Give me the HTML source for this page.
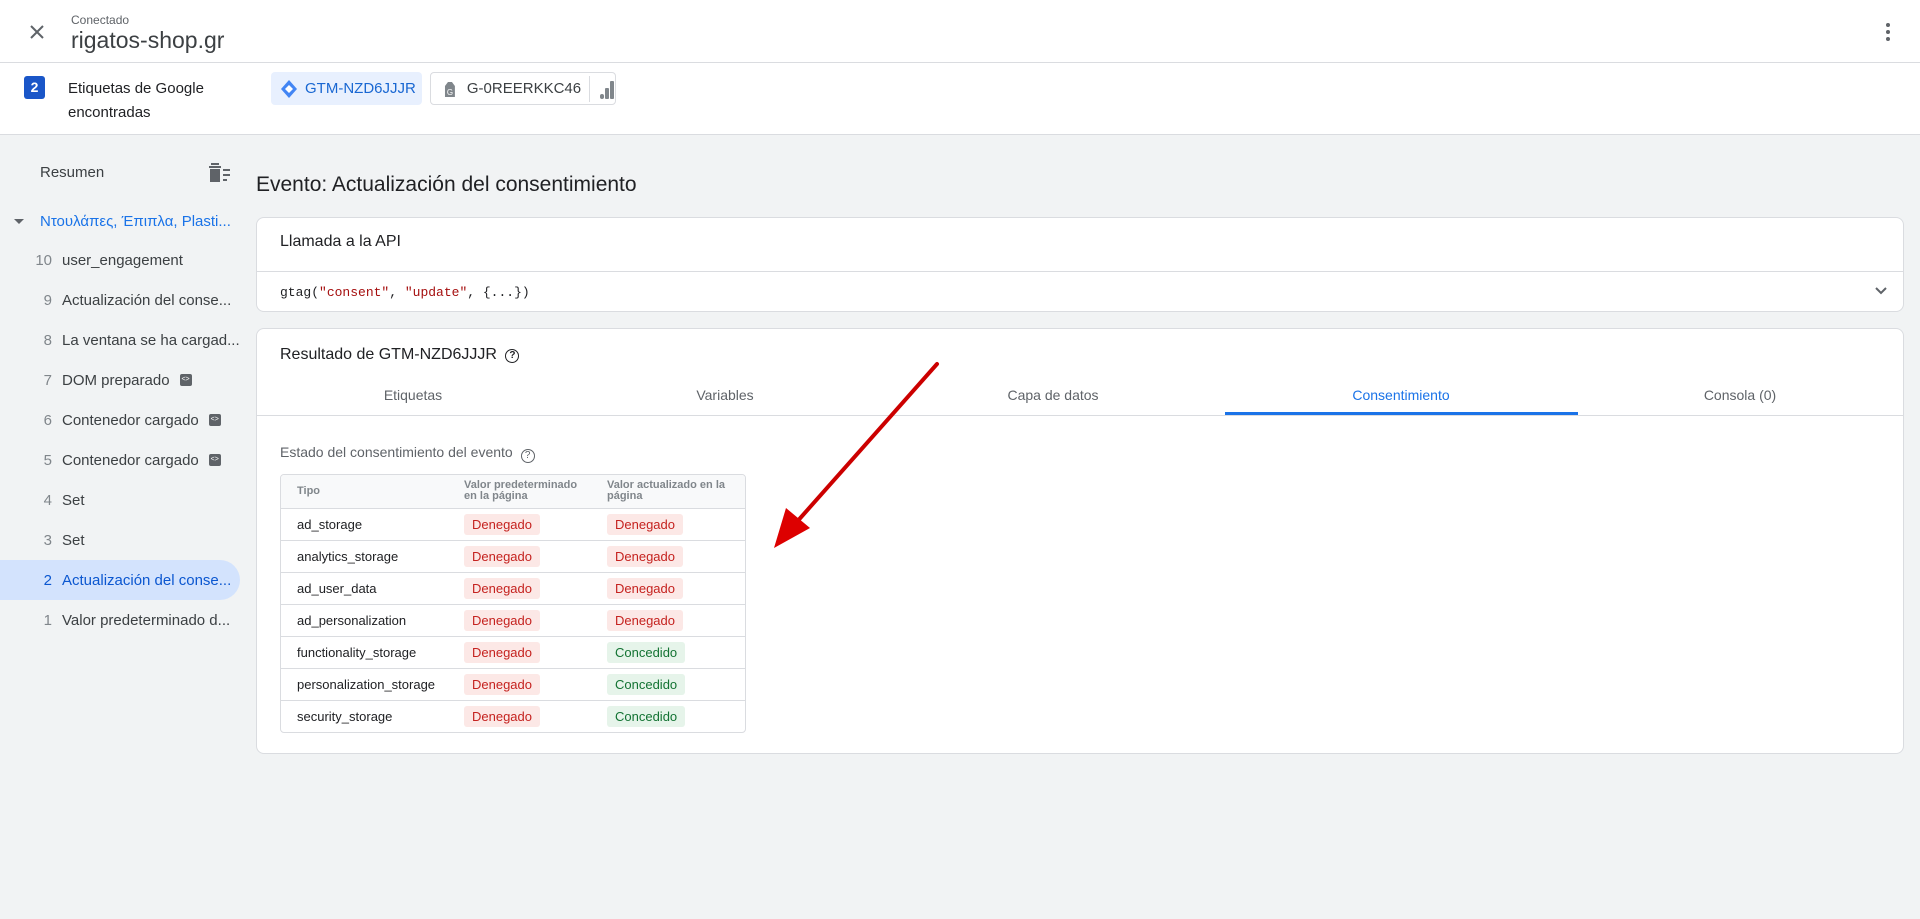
<!DOCTYPE html>
<html><head><meta charset="utf-8"><style>
*{box-sizing:border-box;margin:0;padding:0}
body{width:1920px;height:919px;overflow:hidden;background:#f1f3f4;font-family:"Liberation Sans","Noto Sans CJK SC",sans-serif;color:#202124;position:relative}
.a{position:absolute}
.hdr{left:0;top:0;width:1920px;height:63px;background:#fff;border-bottom:1px solid #dadce0}
.bar{left:0;top:63px;width:1920px;height:72px;background:#fff;border-bottom:1px solid #dadce0}
.chip{height:33px;border-radius:4px;font-size:15px;display:flex;align-items:center;white-space:nowrap}
.side{font-size:15px;color:#3c4043}
.item{position:absolute;left:0;width:240px;height:40px;display:flex;align-items:center;font-size:15px;color:#3c4043;white-space:nowrap}
.item .n{width:62px;text-align:right;padding-right:10px;color:#80868b}
.item.sel{background:#d3e3fd;border-radius:0 20px 20px 0;color:#0b57d0}
.item.sel .n{color:#0b57d0}
.ic{display:inline-block;width:12px;height:12px;background:#5f6368;border-radius:2px;margin-left:10px;color:#fff;font-size:7px;line-height:12px;text-align:center}
.card{background:#fff;border:1px solid #dadce0;border-radius:8px}
.tab{position:absolute;top:387px;font-size:14px;color:#5f6368;transform:translateX(-50%)}
table{border-collapse:collapse;font-size:13px}
.tbl{left:280px;top:474px;width:466px;border:1px solid #dadce0;border-radius:4px;overflow:hidden;background:#fff}
.tbl td{height:32px;border-top:1px solid #dadce0;padding:0}
.tbl th{height:33px;background:#f8f9fa;font-size:11px;color:#80868b;text-align:left;font-weight:bold;line-height:11px;vertical-align:middle}
.d{background:#fce8e6;color:#c5221f;padding:3px 8px;border-radius:3px}
.c{background:#e6f4ea;color:#137333;padding:3px 8px;border-radius:3px}
</style></head><body>
<div class="a hdr"></div>
<svg class="a" style="left:28px;top:23px" width="18" height="18" viewBox="0 0 18 18"><path d="M3 3L15 15M15 3L3 15" stroke="#5f6368" stroke-width="2"/></svg>
<div class="a" style="left:71px;top:13px;font-size:12px;color:#5f6368">Conectado</div>
<div class="a" style="left:71px;top:27px;font-size:23px;color:#3c4043">rigatos-shop.gr</div>
<svg class="a" style="left:1884px;top:22px" width="8" height="20"><circle cx="4" cy="3" r="2" fill="#5f6368"/><circle cx="4" cy="10" r="2" fill="#5f6368"/><circle cx="4" cy="17" r="2" fill="#5f6368"/></svg>
<div class="a bar"></div>
<div class="a" style="left:24px;top:76px;width:21px;height:23px;background:#1a56c8;border-radius:3px;color:#fff;font-weight:bold;font-size:14px;text-align:center;line-height:23px">2</div>
<div class="a" style="left:68px;top:77px;font-size:15px;line-height:24px;color:#202124">Etiquetas de Google<br>encontradas</div>
<div class="a chip" style="left:271px;top:72px;width:151px;background:#e8f0fe;color:#1967d2;padding-left:9px"><svg width="18" height="20" viewBox="0 0 18 20"><path d="M9 1L17 10L9 19L1 10Z" fill="#4285f4"/><path d="M9 6L13 10L9 14L5 10Z" fill="#fff"/></svg><span style="margin-left:7px">GTM-NZD6JJJR</span></div>
<div class="a chip" style="left:430px;top:72px;width:186px;border:1px solid #dadce0;color:#3c4043;padding-left:12px"><svg width="14" height="18" viewBox="0 0 14 18"><path d="M2 6L5 2H9L12 6V17H2Z" fill="#80868b"/><text x="7" y="15" font-size="8" fill="#fff" text-anchor="middle" font-family="Liberation Sans">G</text></svg><span style="margin-left:10px">G-0REERKKC46</span><span style="border-left:1px solid #dadce0;height:26px;margin-left:8px"></span><svg style="margin-left:9px" width="16" height="22"><rect x="1" y="16" width="4" height="5" rx="2" fill="#80868b"/><rect x="6" y="10" width="4" height="11" rx="1" fill="#80868b"/><rect x="11" y="3" width="4" height="18" rx="1" fill="#80868b"/></svg></div>

<div class="a side" style="left:40px;top:164px">Resumen</div>
<svg class="a" style="left:209px;top:163px" width="22" height="20"><rect x="2" y="0" width="8" height="2" fill="#5f6368"/><rect x="0" y="3" width="12" height="2" fill="#5f6368"/><rect x="1" y="6" width="10" height="13" fill="#5f6368"/><rect x="14" y="6" width="7" height="2" fill="#5f6368"/><rect x="14" y="11" width="7" height="2" fill="#5f6368"/><rect x="14" y="16" width="4" height="2" fill="#5f6368"/></svg>
<div class="a" style="left:14px;top:219px;width:0;height:0;border-left:5px solid transparent;border-right:5px solid transparent;border-top:5px solid #5f6368"></div>
<div class="a" style="left:40px;top:213px;font-size:15px;color:#1a73e8">Ντουλάπες, Έπιπλα, Plasti...</div>
<div class="item" style="top:240px"><span class="n">10</span>user_engagement</div>
<div class="item" style="top:280px"><span class="n">9</span>Actualización del conse...</div>
<div class="item" style="top:320px"><span class="n">8</span>La ventana se ha cargad...</div>
<div class="item" style="top:360px"><span class="n">7</span>DOM preparado<span class="ic">&lt;&gt;</span></div>
<div class="item" style="top:400px"><span class="n">6</span>Contenedor cargado<span class="ic">&lt;&gt;</span></div>
<div class="item" style="top:440px"><span class="n">5</span>Contenedor cargado<span class="ic">&lt;&gt;</span></div>
<div class="item" style="top:480px"><span class="n">4</span>Set</div>
<div class="item" style="top:520px"><span class="n">3</span>Set</div>
<div class="item sel" style="top:560px"><span class="n">2</span>Actualización del conse...</div>
<div class="item" style="top:600px"><span class="n">1</span>Valor predeterminado d...</div>

<div class="a" style="left:256px;top:173px;font-size:21px;color:#202124">Evento: Actualización del consentimiento</div>

<div class="a card" style="left:256px;top:217px;width:1648px;height:95px"></div>
<div class="a" style="left:280px;top:233px;font-size:16px">Llamada a la API</div>
<div class="a" style="left:257px;top:271px;width:1646px;border-top:1px solid #dadce0"></div>
<div class="a" style="left:280px;top:285px;font-family:'Liberation Mono',monospace;font-size:13px;color:#202124">gtag(<span style="color:#a50e0e">"consent"</span>, <span style="color:#a50e0e">"update"</span>, {...})</div>
<svg class="a" style="left:1874px;top:286px" width="14" height="10"><path d="M2 2L7 7L12 2" stroke="#5f6368" stroke-width="2" fill="none"/></svg>

<div class="a card" style="left:256px;top:328px;width:1648px;height:426px"></div>
<div class="a" style="left:280px;top:346px;font-size:16px">Resultado de GTM-NZD6JJJR <span style="display:inline-block;width:14px;height:14px;border:1.5px solid #202124;border-radius:50%;font-size:10px;text-align:center;line-height:11px;font-weight:bold;vertical-align:1px;margin-left:4px">?</span></div>
<div class="tab" style="left:413px">Etiquetas</div>
<div class="tab" style="left:725px">Variables</div>
<div class="tab" style="left:1053px">Capa de datos</div>
<div class="tab" style="left:1401px;color:#1a73e8">Consentimiento</div>
<div class="tab" style="left:1740px">Consola (0)</div>
<div class="a" style="left:257px;top:415px;width:1646px;border-top:1px solid #dadce0"></div>
<div class="a" style="left:1225px;top:412px;width:353px;height:3px;background:#1a73e8"></div>
<div class="a" style="left:280px;top:444px;font-size:14px;color:#5f6368">Estado del consentimiento del evento <span style="display:inline-block;width:14px;height:14px;border:1.5px solid #5f6368;border-radius:50%;font-size:10px;text-align:center;line-height:11px;vertical-align:-1px;margin-left:4px">?</span></div>
<div class="a tbl"><table style="width:100%">
<tr><th style="padding-left:16px;width:183px">Tipo</th><th style="width:143px">Valor predeterminado<br>en la página</th><th>Valor actualizado en la<br>página</th></tr>
<tr><td style="padding-left:16px">ad_storage</td><td><span class="d">Denegado</span></td><td><span class="d">Denegado</span></td></tr>
<tr><td style="padding-left:16px">analytics_storage</td><td><span class="d">Denegado</span></td><td><span class="d">Denegado</span></td></tr>
<tr><td style="padding-left:16px">ad_user_data</td><td><span class="d">Denegado</span></td><td><span class="d">Denegado</span></td></tr>
<tr><td style="padding-left:16px">ad_personalization</td><td><span class="d">Denegado</span></td><td><span class="d">Denegado</span></td></tr>
<tr><td style="padding-left:16px">functionality_storage</td><td><span class="d">Denegado</span></td><td><span class="c">Concedido</span></td></tr>
<tr><td style="padding-left:16px">personalization_storage</td><td><span class="d">Denegado</span></td><td><span class="c">Concedido</span></td></tr>
<tr><td style="padding-left:16px">security_storage</td><td><span class="d">Denegado</span></td><td><span class="c">Concedido</span></td></tr>
</table></div>
<svg class="a" style="left:760px;top:350px" width="190" height="210"><path d="M177 14L35 174" stroke="#c00" stroke-width="4" stroke-linecap="round"/><path d="M14 198L26 158L50 178Z" fill="#d00"/></svg>
</body></html>
